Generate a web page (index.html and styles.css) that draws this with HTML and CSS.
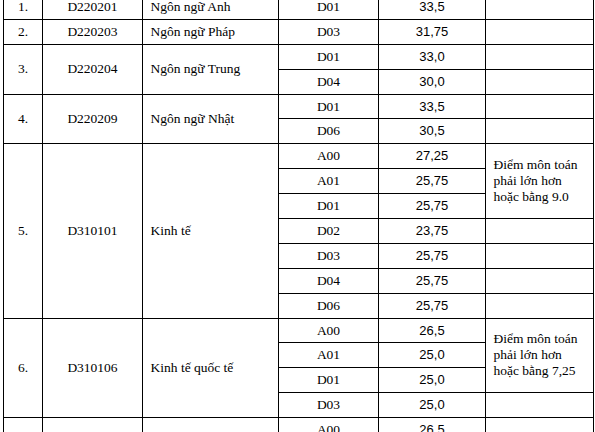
FILE: index.html
```html
<!DOCTYPE html>
<html lang="vi">
<head>
<meta charset="utf-8">
<title>Điểm chuẩn</title>
<link rel="stylesheet" href="styles.css">
</head>
<body>
<div class="page">
<table class="scores">
  <colgroup>
    <col class="c-no"><col class="c-code"><col class="c-name"><col class="c-grp"><col class="c-score"><col class="c-note">
  </colgroup>
  <tbody>
    <tr>
      <td class="no">1.</td><td class="code">D220201</td><td class="name">Ngôn ngữ Anh</td>
      <td class="grp">D01</td><td class="score">33,5</td><td class="note"></td>
    </tr>
    <tr>
      <td class="no">2.</td><td class="code">D220203</td><td class="name">Ngôn ngữ Pháp</td>
      <td class="grp">D03</td><td class="score">31,75</td><td class="note"></td>
    </tr>
    <tr>
      <td class="no" rowspan="2">3.</td><td class="code merged" rowspan="2">D220204</td><td class="name merged" rowspan="2">Ngôn ngữ Trung</td>
      <td class="grp">D01</td><td class="score">33,0</td><td class="note"></td>
    </tr>
    <tr>
      <td class="grp">D04</td><td class="score">30,0</td><td class="note"></td>
    </tr>
    <tr>
      <td class="no" rowspan="2">4.</td><td class="code merged" rowspan="2">D220209</td><td class="name merged" rowspan="2">Ngôn ngữ Nhật</td>
      <td class="grp">D01</td><td class="score">33,5</td><td class="note"></td>
    </tr>
    <tr>
      <td class="grp">D06</td><td class="score">30,5</td><td class="note"></td>
    </tr>
    <tr>
      <td class="no" rowspan="7">5.</td><td class="code merged" rowspan="7">D310101</td><td class="name merged" rowspan="7">Kinh tế</td>
      <td class="grp">A00</td><td class="score">27,25</td><td class="note text" rowspan="3">Điểm môn toán phải lớn hơn hoặc bằng 9.0</td>
    </tr>
    <tr><td class="grp">A01</td><td class="score">25,75</td></tr>
    <tr><td class="grp">D01</td><td class="score">25,75</td></tr>
    <tr><td class="grp">D02</td><td class="score">23,75</td><td class="note"></td></tr>
    <tr><td class="grp">D03</td><td class="score">25,75</td><td class="note"></td></tr>
    <tr><td class="grp">D04</td><td class="score">25,75</td><td class="note"></td></tr>
    <tr><td class="grp">D06</td><td class="score">25,75</td><td class="note"></td></tr>
    <tr>
      <td class="no" rowspan="4">6.</td><td class="code merged" rowspan="4">D310106</td><td class="name merged" rowspan="4">Kinh tế quốc tế</td>
      <td class="grp">A00</td><td class="score">26,5</td><td class="note text" rowspan="3">Điểm môn toán phải lớn hơn hoặc bằng 7,25</td>
    </tr>
    <tr><td class="grp">A01</td><td class="score">25,0</td></tr>
    <tr><td class="grp">D01</td><td class="score">25,0</td></tr>
    <tr><td class="grp">D03</td><td class="score">25,0</td><td class="note"></td></tr>
    <tr>
      <td class="no soft-top" rowspan="3"></td><td class="code merged soft-top" rowspan="3"></td><td class="name merged soft-top" rowspan="3"></td>
      <td class="grp">A00</td><td class="score">26,5</td><td class="note text lower" rowspan="3">Điểm môn toán phải lớn hơn</td>
    </tr>
    <tr><td class="grp">A01</td><td class="score"></td></tr>
    <tr><td class="grp">D01</td><td class="score"></td></tr>
  </tbody>
</table>
</div>
</body>
</html>
```

FILE: styles.css
```css
html, body {
  margin: 0;
  padding: 0;
  background: #ffffff;
  overflow: hidden;
}

.page {
  padding-left: 3px;
  height: 432px;
  overflow: hidden;
}

.scores {
  margin-top: -6px;
  border-collapse: collapse;
  table-layout: fixed;
  width: 590px;
  font-family: "Liberation Serif", "Times New Roman", serif;
  font-size: 13.5px;
  color: #000;
}

.c-no { width: 39px; }
.c-code { width: 100px; }
.c-name { width: 136px; }
.c-grp { width: 100px; }
.c-score { width: 107px; }
.c-note { width: 108px; }

.scores tr { height: 24.9px; }

.scores td {
  border: 1px solid #000;
  padding: 0;
  vertical-align: middle;
  line-height: 16px;
  white-space: nowrap;
}

.scores td.no,
.scores td.code,
.scores td.grp,
.scores td.score { text-align: center; }

.scores td.name { padding-left: 7.5px; text-align: left; }

.scores td.score {
  font-family: "Liberation Sans", Arial, sans-serif;
  font-size: 13px;
}

.scores td.code.merged { border-left-color: #6b6b6b; }
.scores td.name.merged { border-left-color: #a8a8a8; }
.scores td.soft-top { border-top-color: #888; }

.scores td.note.text {
  white-space: normal;
  padding: 0 10px 0 7.5px;
  text-align: left;
}

.scores td.note.lower { vertical-align: top; padding-top: 13px; }
```
